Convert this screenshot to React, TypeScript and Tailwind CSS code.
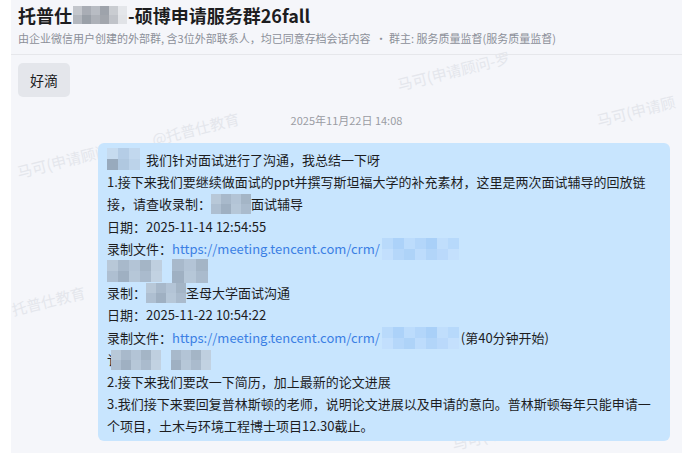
const font = { fontFamily: '"Noto Sans CJK SC", "Noto Sans", sans-serif' };

function Mosaic({ rows, cell, className = "" }: { rows: string[][]; cell: number; className?: string }) {
  return (
    <span className={"inline-flex flex-col align-middle " + className}>
      {rows.map((r, i) => (
        <span key={i} className="flex">
          {r.map((c, j) => (
            <span key={j} style={{ width: cell, height: cell, background: c }} />
          ))}
        </span>
      ))}
    </span>
  );
}

const gray1 = [
  ["#c3c6cc", "#a9adb5", "#b8bcc3", "#9ea3ab", "#c9ccd1", "#e4e6ea"],
  ["#b3b7be", "#9aa0a8", "#adb1b8", "#a2a6ad", "#c0c3c9", "#e1e3e7"],
];
const blueGray = [
  ["#c6dbef", "#b5cde6", "#c2d8ee"],
  ["#98aabd", "#b0c8e0", "#bcd3ea"],
];
const lightBlue = [
  ["#b9dafb", "#acd2f9", "#bcdcfc", "#b3d6fa", "#a9d0f8", "#c0defc", "#b7d9fb"],
  ["#c2dffd", "#b5d7fa", "#aed3f8", "#bddcfc", "#b2d5f9", "#bad9fb", "#c4e0fd"],
];
const bubbleGray = [
  ["#b8c8d8", "#a8b9cb", "#b3c4d6", "#a4b5c6", "#bfcfdf"],
  ["#aebfd1", "#9fb0c2", "#b6c7d8", "#aabbcd", "#c2d2e2"],
];

function Watermark({ text, className }: { text: string; className: string }) {
  return (
    <span className={"absolute whitespace-nowrap text-[15px] text-[#e4e6ec] -rotate-[14deg] " + className}>{text}</span>
  );
}

const Link = ({ children }: { children: React.ReactNode }) => (
  <span className="text-[#3b7fe4]">{children}</span>
);

const row = "flex h-[22.2px] items-center";

export default function App() {
  return (
    <div className="w-[682px] h-[453px] bg-white flex overflow-hidden" style={font}>
      <div className="w-[11px] shrink-0" />
      <div className="relative flex-1 bg-[#f5f6fa]">
        <Watermark text="马可(申请顾问-罗" className="left-[385px] top-[60px]" />
        <Watermark text="@托普仕教育" className="left-[140px] top-[118px]" />
        <Watermark text="马可(申请顾问" className="left-[5px] top-[150px]" />
        <Watermark text="马可(申请顾" className="left-[585px] top-[100px]" />
        <Watermark text="马可(申请顾问" className="left-[440px] top-[422px]" />
        <Watermark text="托普仕教育" className="left-[0px] top-[290px]" />

        <div className="relative z-10">
          <div className="h-[55px] border-b border-[#e6e7eb] pl-[7px] pt-[2px]">
            <div className="flex items-center text-[18px] leading-[26px] font-bold text-[#1d1d1f]">
              <span>托普仕</span>
              <Mosaic rows={gray1} cell={9} className="mx-[1px]" />
              <span>-硕博申请服务群26fall</span>
            </div>
            <div className="mt-[2px] text-[11px] leading-[16px] text-[#8c9099]">
              由企业微信用户创建的外部群, 含3位外部联系人，均已同意存档会话内容 &nbsp;· 群主: 服务质量监督(服务质量监督)
            </div>
          </div>

          <div className="ml-[7px] mt-[8px] inline-flex h-[34px] w-[52px] items-center justify-center rounded-[5px] bg-[#e4e6eb] text-[14px] text-[#1d1d1f]">
            好滴
          </div>

          <div className="mt-[15px] text-center text-[11px] leading-[16px] text-[#9a9ca3]">2025年11月22日 14:08</div>

          <div className="ml-[87px] mt-[15px] w-[572px] rounded-[6px] bg-[#c8e5fe] pl-[9px] pr-[10px] pt-[6px] pb-[4px] text-[13px] leading-[22.2px] text-[#1d1d1f] whitespace-nowrap">
            <div className={row}>
              <Mosaic rows={blueGray} cell={11} className="mr-[6px] -mt-[3px]" />
              <span>我们针对面试进行了沟通，我总结一下呀</span>
            </div>
            <div className={row}>1.接下来我们要继续做面试的ppt并撰写斯坦福大学的补充素材，这里是两次面试辅导的回放链</div>
            <div className={row}>
              <span>接，请查收录制：</span>
              <Mosaic rows={bubbleGray.map((r) => r.slice(0, 4))} cell={10} />
              <span>面试辅导</span>
            </div>
            <div className={row}>日期：2025-11-14 12:54:55</div>
            <div className={row}>
              <span>录制文件：</span>
              <Link>https://meeting.tencent.com/crm/</Link>
              <Mosaic rows={lightBlue} cell={11} className="ml-[2px]" />
            </div>
            <div className={row}>
              <Mosaic rows={bubbleGray.concat([])} cell={11} />
              <span className="w-[10px]" />
              <Mosaic rows={bubbleGray.map((r) => r.slice(1, 4))} cell={12} />
            </div>
            <div className={row}>
              <span>录制：</span>
              <Mosaic rows={bubbleGray.map((r) => r.slice(0, 4))} cell={10} />
              <span>圣母大学面试沟通</span>
            </div>
            <div className={row}>日期：2025-11-22 10:54:22</div>
            <div className={row}>
              <span>录制文件：</span>
              <Link>https://meeting.tencent.com/crm/</Link>
              <Mosaic rows={lightBlue.map((r) => r.slice(0, 7))} cell={11} className="ml-[2px] mr-[2px]" />
              <span>(第40分钟开始)</span>
            </div>
            <div className={row}>
              <span className="w-[4px] overflow-hidden">讠</span>
              <Mosaic rows={bubbleGray} cell={10} />
              <span className="w-[10px]" />
              <Mosaic rows={bubbleGray.map((r) => r.slice(1, 5))} cell={10} />
            </div>
            <div className={row}>2.接下来我们要改一下简历，加上最新的论文进展</div>
            <div className={row}>3.我们接下来要回复普林斯顿的老师，说明论文进展以及申请的意向。普林斯顿每年只能申请一</div>
            <div className={row}>个项目，土木与环境工程博士项目12.30截止。</div>
          </div>
        </div>
      </div>
    </div>
  );
}
